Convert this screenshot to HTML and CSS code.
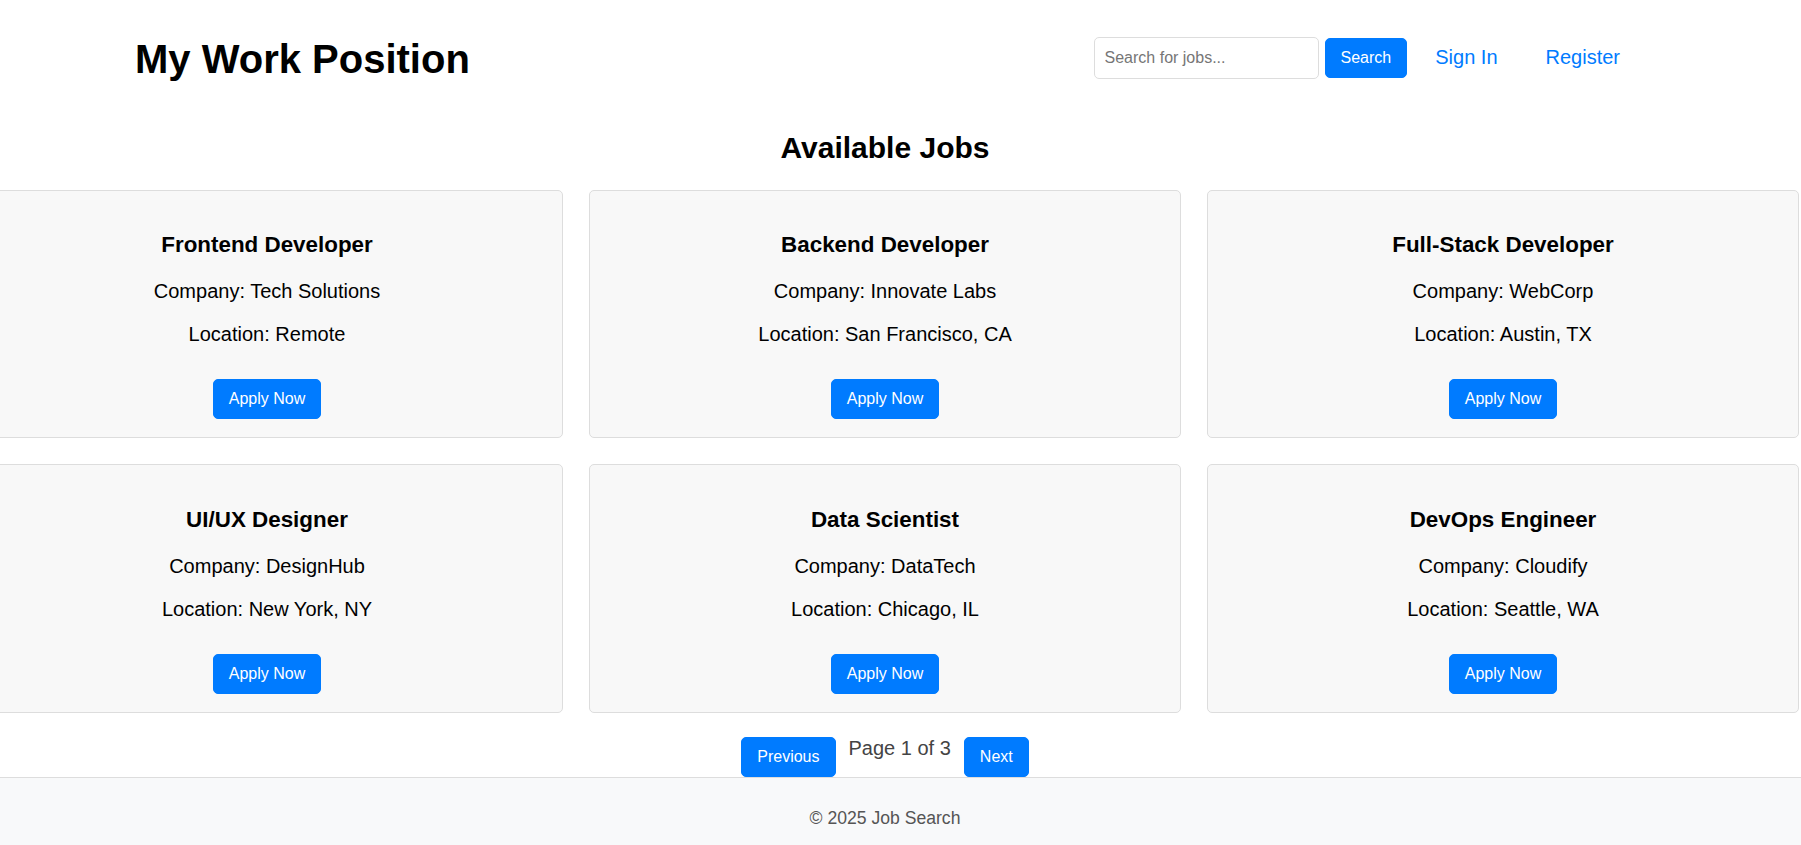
FILE: index.html
```html
<!DOCTYPE html>
<html lang="en">
<head>
<meta charset="utf-8">
<title>My Work Position</title>
<link rel="stylesheet" href="styles.css">
</head>
<body>
<div class="page">
  <header class="site-header">
    <h1 class="logo">My Work Position</h1>
    <nav class="nav">
      <form class="search">
        <input class="search-input" type="text" placeholder="Search for jobs...">
        <button class="btn" type="button">Search</button>
      </form>
      <a class="nav-link" href="#">Sign In</a>
      <a class="nav-link" href="#">Register</a>
    </nav>
  </header>
  <main class="content">
    <h2 class="section-title">Available Jobs</h2>
    <div class="jobs">
      <div class="job-card">
        <h3 class="job-title">Frontend Developer</h3>
        <p class="job-meta">Company: Tech Solutions</p>
        <p class="job-meta">Location: Remote</p>
        <button class="btn btn-apply" type="button">Apply Now</button>
      </div>
      <div class="job-card">
        <h3 class="job-title">Backend Developer</h3>
        <p class="job-meta">Company: Innovate Labs</p>
        <p class="job-meta">Location: San Francisco, CA</p>
        <button class="btn btn-apply" type="button">Apply Now</button>
      </div>
      <div class="job-card">
        <h3 class="job-title">Full-Stack Developer</h3>
        <p class="job-meta">Company: WebCorp</p>
        <p class="job-meta">Location: Austin, TX</p>
        <button class="btn btn-apply" type="button">Apply Now</button>
      </div>
      <div class="job-card">
        <h3 class="job-title">UI/UX Designer</h3>
        <p class="job-meta">Company: DesignHub</p>
        <p class="job-meta">Location: New York, NY</p>
        <button class="btn btn-apply" type="button">Apply Now</button>
      </div>
      <div class="job-card">
        <h3 class="job-title">Data Scientist</h3>
        <p class="job-meta">Company: DataTech</p>
        <p class="job-meta">Location: Chicago, IL</p>
        <button class="btn btn-apply" type="button">Apply Now</button>
      </div>
      <div class="job-card">
        <h3 class="job-title">DevOps Engineer</h3>
        <p class="job-meta">Company: Cloudify</p>
        <p class="job-meta">Location: Seattle, WA</p>
        <button class="btn btn-apply" type="button">Apply Now</button>
      </div>
    </div>
    <div class="pagination">
      <button class="btn" type="button">Previous</button>
      <span class="page-info">Page 1 of 3</span>
      <button class="btn" type="button">Next</button>
    </div>
  </main>
</div>
<footer class="site-footer">
  <div class="footer-inner">
    <p class="copyright">© 2025 Job Search</p>
  </div>
</footer>
</body>
</html>
```

FILE: styles.css
```css
* {
  box-sizing: border-box;
}

html, body {
  margin: 0;
  padding: 0;
  background: #ffffff;
}

body {
  font-family: "Liberation Sans", Arial, sans-serif;
  font-size: 16px;
  color: #000;
  overflow-x: hidden;
}

.page {
  width: 1770px;
}

/* Header */
.site-header {
  display: flex;
  align-items: center;
  justify-content: space-between;
  height: 115px;
  padding: 0 130px 0 135px;
}

.logo {
  margin: 0;
  padding-top: 3px;
  font-size: 40px;
  font-weight: bold;
  line-height: normal;
  color: #000;
}

.nav {
  display: flex;
  align-items: center;
}

.search {
  display: flex;
  align-items: center;
  gap: 6px;
  margin: 0;
}

.search-input {
  width: 225px;
  height: 42px;
  padding: 0 10px;
  font-family: "Liberation Sans", Arial, sans-serif;
  font-size: 16px;
  color: #333;
  border: 1px solid #dddddd;
  border-radius: 5px;
  outline: none;
  background: #fff;
}

.search-input::placeholder {
  color: #767676;
}

.btn {
  font-family: "Liberation Sans", Arial, sans-serif;
  font-size: 16px;
  line-height: normal;
  color: #fff;
  background: #007bff;
  border: 1px solid #007bff;
  border-radius: 5px;
  padding: 10px 15px;
  cursor: pointer;
}

.nav-link {
  margin-left: 8px;
  padding: 0 20px;
  font-size: 20px;
  color: #007bff;
  text-decoration: none;
}

/* Main */
.section-title {
  margin: 16px 0 24.5px;
  text-align: center;
  font-size: 30px;
  font-weight: bold;
  line-height: normal;
  color: #000;
}

.jobs {
  display: grid;
  grid-template-columns: repeat(3, 1fr);
  gap: 26px;
  margin: 0 -29px;
}

.job-card {
  background: #f8f8f8;
  border: 1px solid #dddddd;
  border-radius: 5px;
  padding: 19px 18px 18px;
  text-align: center;
}

.job-title {
  margin: 22.4px 0;
  font-size: 22.4px;
  font-weight: bold;
  line-height: normal;
  color: #000;
}

.job-meta {
  margin: 20px 0;
  font-size: 20px;
  line-height: normal;
  color: #000;
}

.btn-apply {
  display: inline-block;
  margin-top: 13px;
  vertical-align: baseline;
}

.pagination {
  display: flex;
  justify-content: center;
  align-items: flex-start;
  gap: 13px;
  margin-top: 24px;
}

.page-info {
  font-size: 20px;
  line-height: normal;
  color: #444;
}

/* Footer */
.site-footer {
  background: #f8f9fa;
  border-top: 1px solid #dddddd;
}

.footer-inner {
  width: 1770px;
  padding: 30px 0 30px;
  text-align: center;
}

.copyright {
  margin: 0;
  font-size: 17.6px;
  line-height: normal;
  color: #555;
}
```
